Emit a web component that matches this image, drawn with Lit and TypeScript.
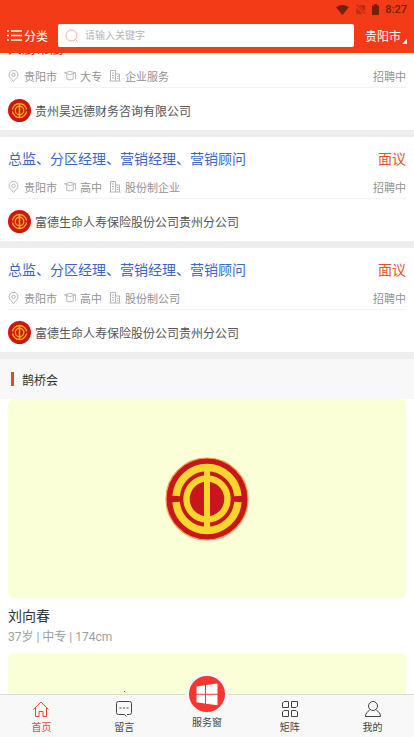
import { LitElement, html, css, svg } from "lit";
import { customElement, property } from "lit/decorators.js";

const emblem = html`<svg class="emblem" viewBox="0 0 84 84" role="img" aria-label="工会会徽">
  <circle cx="42" cy="42" r="41" fill="#c8161d" stroke="#f6a04a" stroke-width="1.2" />
  <g fill="none" stroke="#f8d62e">
    <path stroke-width="7.5" d="M11.100 39A31 31 0 0 1 72.900 39M11.100 45A31 31 0 0 0 72.900 45" />
    <circle cx="42" cy="42" r="20.5" stroke-width="6.5" />
    <path stroke-width="6" d="M42 10V74" />
  </g>
</svg>`;

const smallEmblem = html`<svg class="emblem" viewBox="0 0 84 84" role="img" aria-label="工会会徽">
  <circle cx="42" cy="42" r="42" fill="#cb1710" />
  <g fill="none" stroke="#f5a81c">
    <path stroke-width="5" d="M16.200 39A26 26 0 0 1 67.800 39M16.200 45A26 26 0 0 0 67.800 45" />
    <circle cx="42" cy="42" r="15.5" stroke-width="5" />
    <path stroke-width="6" d="M42 15V69" />
  </g>
</svg>`;

const pin = svg`<path d="M5.500 11.500C3.500 9 1 7 1 4.900a4.500 4.500 0 0 1 9 0c0 2.100-2.500 4.100-4.500 6.600z"/><circle cx="5.500" cy="4.800" r="1.700"/>`;
const cap = svg`<path d="M.500 2.500 6.500 1l6 1.500-6 2zM3 3.500v6q3.500 1.500 7 0v-6M12.500 2.500v7"/>`;
const building = svg`<path d="M1.500 11V.500h5V11M6.500 4h4v7M.500 11h11M3 3h2M3 5.500h2M3 8h2M8 6.500h1.500M8 8.500h1.500"/>`;

interface Job {
  title: string;
  pay: string;
  city: string;
  degree: string;
  kind: string;
  company: string;
}

const jobs: Job[] = [
  { title: "大厨帮厨", pay: "", city: "贵阳市", degree: "大专", kind: "企业服务", company: "贵州昊远德财务咨询有限公司" },
  { title: "总监、分区经理、营销经理、营销顾问", pay: "面议", city: "贵阳市", degree: "高中", kind: "股份制企业", company: "富德生命人寿保险股份公司贵州分公司" },
  { title: "总监、分区经理、营销经理、营销顾问", pay: "面议", city: "贵阳市", degree: "高中", kind: "股份制公司", company: "富德生命人寿保险股份公司贵州分公司" },
];

@customElement("job-card")
class JobCard extends LitElement {
  @property({ attribute: false }) job!: Job;

  static styles = css`
    :host { display: block; padding: 8px 8px 0; background: #fff; border-bottom: 7px solid #eeeef0; }
    .head, .meta, .company, .tag { display: flex; align-items: center; }
    .head { height: 26px; justify-content: space-between; font-size: 14px; }
    .title { color: #3d66c4; text-decoration: none; }
    .title:not(.paid) { color: #c8302c; }
    .pay { color: #e0532f; }
    .meta { height: 23px; padding-top: 4px; gap: 7px; font-size: 11px; color: #929292; border-bottom: 1px solid #f3f3f3; }
    .tag { gap: 4px; }
    .tag svg { width: 12px; height: 12px; fill: none; stroke: #b4b4b4; stroke-width: 1; }
    .status { margin-left: auto; }
    .company { height: 40px; padding-top: 2px; gap: 4px; font-size: 12px; color: #555; }
    .emblem { width: 23px; height: 23px; }
  `;

  render() {
    const j = this.job;
    return html`
      <div class="head"><a class="title ${j.pay ? "paid" : ""}" href="#job">${j.title}</a><span class="pay">${j.pay}</span></div>
      <div class="meta">
        <span class="tag"><svg viewBox="0 0 12 12">${pin}</svg>${j.city}</span>
        <span class="tag"><svg viewBox="0 0 13 12">${cap}</svg>${j.degree}</span>
        <span class="tag"><svg viewBox="0 0 12 12">${building}</svg>${j.kind}</span>
        <span class="status">招聘中</span>
      </div>
      <div class="company">${smallEmblem}<span>${j.company}</span></div>
    `;
  }
}

@customElement("app-root")
class AppRoot extends LitElement {
  static styles = css`
    :host {
      display: flex; flex-direction: column; height: 100vh; overflow: hidden; background: #fff;
      font-family: Roboto, "Noto Sans CJK SC", sans-serif;
    }
    button, input { font: inherit; color: inherit; border: 0; padding: 0; background: none; }
    header { flex: none; background: #f43b17; color: #fff; padding-bottom: 6px; }
    .statusbar { display: flex; align-items: center; justify-content: flex-end; gap: 6px; height: 18px; padding: 0 7px; font-size: 11px; font-weight: 500; color: #75200f; }
    .statusbar svg { height: 11px; fill: #75200f; }
    .bar { display: flex; align-items: center; padding: 6px 7px 0; font-size: 12px; }
    .category { display: flex; align-items: center; gap: 2px; height: 23px; }
    .category svg { width: 15px; height: 13px; stroke: #fff; stroke-width: 1.4; }
    .search { flex: 1; display: flex; align-items: center; gap: 6px; height: 23px; margin: 0 11px 0 10px; padding: 0 7px; background: #fff; border-radius: 2px; min-width: 0; }
    .search svg { width: 14px; height: 14px; fill: none; stroke: #f1aaa6; }
    .search input { flex: 1; min-width: 0; font-size: 10px; color: #555; outline: 0; }
    .search input::placeholder { color: #b5b5b5; opacity: 1; }
    .city { display: flex; align-items: center; height: 23px; }
    .city svg { align-self: flex-end; width: 6px; height: 8px; fill: #fff; }
    main { flex: 1; min-height: 0; overflow-y: auto; scrollbar-width: none; }
    h2 { display: flex; align-items: center; gap: 8px; height: 40px; margin: 0; padding: 0 11px; background: #f8f8f8; color: #333; font-size: 12px; font-weight: 400; }
    h2::before { content: ""; width: 3px; height: 14px; background: #e0492f; }
    .people { padding: 0 8px 8px; }
    .photo { display: flex; align-items: center; justify-content: center; height: 199px; border-radius: 6px; background: #faffd7; }
    .photo .emblem { width: 84px; height: 84px; }
    h3 { margin: 0; padding-top: 8px; font-size: 14px; line-height: 21px; font-weight: 400; color: #333; }
    p { margin: 0; padding-bottom: 5px; font-size: 12px; line-height: 21px; color: #9a9f9f; }
    nav { position: relative; z-index: 1; flex: none; display: flex; height: 42px; background: #f8f8f8; border-top: 1px solid #dcdcdc; }
    .tab { flex: 1; display: flex; flex-direction: column; align-items: center; justify-content: flex-end; gap: 4px; padding-bottom: 2px; font-size: 10px; line-height: 14px; color: #444; text-decoration: none; }
    .tab svg { width: 16px; height: 16px; fill: none; stroke: currentColor; stroke-width: 1; }
    .active { color: #e8492e; }
    .center { position: relative; padding-bottom: 7px; }
    .center .disc { position: absolute; top: -22px; left: 50%; margin-left: -21px; width: 36px; height: 36px; padding: 3px; border-radius: 50%; background: #f8f8f8; }
    .center .disc svg { display: block; width: 36px; height: 36px; stroke: none; }
    .center span { position: relative; }
    .dot { position: absolute; top: -4px; left: 30%; width: 1px; height: 1px; background: #555; }
  `;

  firstUpdated() {
    const main = this.renderRoot.querySelector("main")!;
    customElements.whenDefined("job-card").then(async () => {
      const cards = Array.from(main.querySelectorAll("job-card")) as LitElement[];
      await Promise.all(cards.map((c) => c.updateComplete));
      main.scrollTop = 27;
    });
  }

  render() {
    return html`
      <header>
        <div class="statusbar">
          <svg viewBox="0 0 14 12"><path d="M0 3.500Q7-1.500 14 3.500L7 12z" /></svg>
          <svg viewBox="0 0 12 12" opacity=".45"><path d="M4 1h7v7zM1.500 4 8.500 11h-7zM1 1l1-.7L11.700 10l-1 1z" /></svg>
          <svg viewBox="0 0 8 12"><path d="M2.500 0h3v1.500H8V12H0V1.500h2.500z" /></svg>
          <span>8:27</span>
        </div>
        <div class="bar">
          <button class="category">
            <svg viewBox="0 0 15 13"><path d="M0 2h2M0 6.500h2M0 11h2M4 2h11M4 6.500h11M4 11h11" /></svg>分类
          </button>
          <label class="search">
            <svg viewBox="0 0 14 14"><circle cx="6.500" cy="6.500" r="5.500" /><path d="m10.500 10.500 2 2" /></svg>
            <input type="search" placeholder="请输入关键字" aria-label="搜索" />
          </label>
          <button class="city">贵阳市<svg viewBox="0 0 6 8"><path d="M6 0v5H1z" /></svg></button>
        </div>
      </header>
      <main>
        ${jobs.map((job) => html`<job-card .job=${job}></job-card>`)}
        <h2>鹊桥会</h2>
        <section class="people">
          <div class="photo">${emblem}</div>
          <h3>刘向春</h3>
          <p>37岁 | 中专 | 174cm</p>
          <div class="photo">${emblem}</div>
        </section>
      </main>
      <nav>
        <i class="dot"></i>
        <a class="tab active" href="#home">
          <svg viewBox="0 0 16 16"><path d="M.500 8.500 8 1l7.500 7.500M2.500 7v8.500h3.500v-5h4v5h3.500V7" /></svg>首页
        </a>
        <a class="tab" href="#messages">
          <svg viewBox="0 0 16 16"><path d="M2.500 .500h11a2 2 0 0 1 2 2v9a2 2 0 0 1-2 2H11M8.500 13.500h-6a2 2 0 0 1-2-2v-9a2 2 0 0 1 2-2M8.500 13.500l2 2" /><path d="M3.500 7h2M7 7h2M10.500 7h2" /></svg>留言
        </a>
        <a class="tab center" href="#services">
          <div class="disc"><svg viewBox="0 0 36 36"><circle cx="18" cy="18" r="18" fill="#f8352f" /><path fill="#fff" d="M7.500 10.500l8.500-1.200v8.400H7.500zM17 9.100 28.500 7.500v10.200H17zM7.500 18.700H16V27.500l-8.500-1.300zM17 18.700h11.500V29.300L17 27.700z" /></svg></div>
          <span>服务窗</span>
        </a>
        <a class="tab" href="#matrix">
          <svg viewBox="0 0 16 16"><path d="M2 .500h4.500v6h-6V2zM9.500 .500h6V5L14 6.500H9.500zM2 9.500h4.500v6h-6V11zM9.500 9.500H14l1.500 1.500v4.500h-6z" /></svg>矩阵
        </a>
        <a class="tab" href="#mine">
          <svg viewBox="0 0 16 16"><circle cx="8" cy="5" r="4.500" /><path d="M5 8.500 2 11.500Q.500 13 .500 15.500h15q0-2.500-1.500-4L11 8.500" /></svg>我的
        </a>
      </nav>
    `;
  }
}
